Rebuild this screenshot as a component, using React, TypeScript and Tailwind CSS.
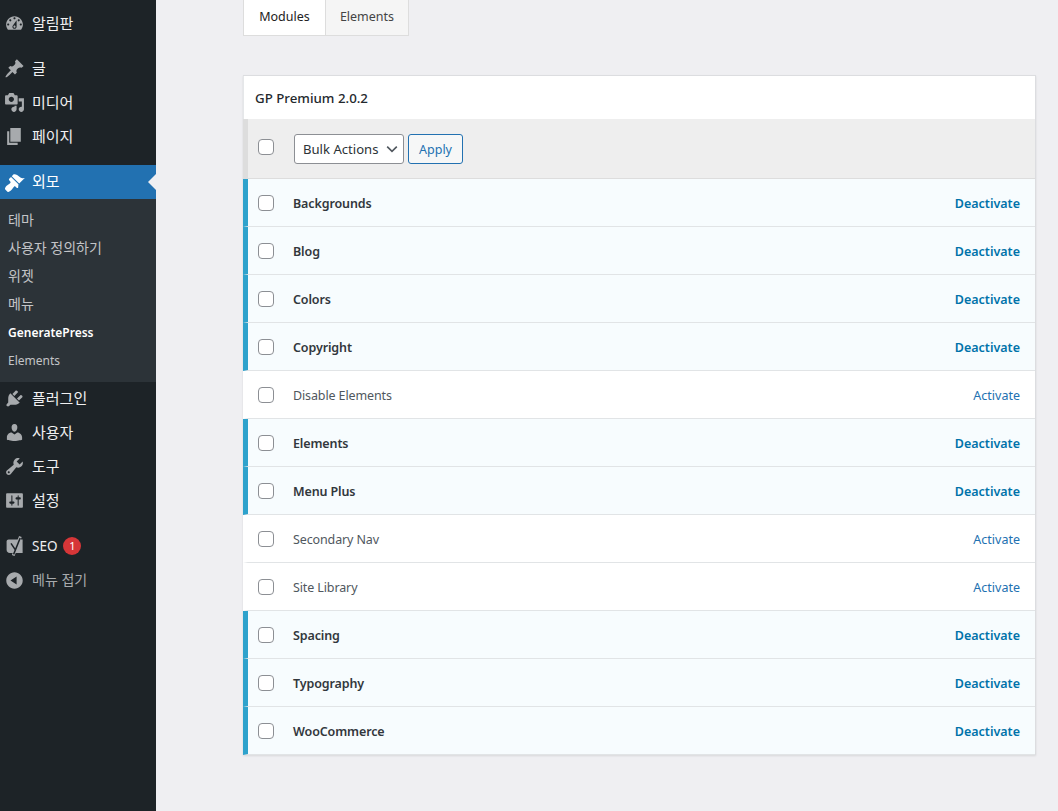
import React from "react";

const P: Record<string, string> = {
  dashboard: "M3.76 16h12.48c1.1-1.37 1.76-3.11 1.76-5 0-4.42-3.58-8-8-8s-8 3.58-8 8c0 1.89.66 3.63 1.76 5zM10 4c.55 0 1 .45 1 1s-.45 1-1 1-1-.45-1-1 .45-1 1-1zM6 6c.55 0 1 .45 1 1s-.45 1-1 1-1-.45-1-1 .45-1 1-1zm8 0c.55 0 1 .45 1 1s-.45 1-1 1-1-.45-1-1 .45-1 1-1zm-5.37 5.55L12 7v6c0 1.1-.9 2-2 2s-2-.9-2-2c0-.57.24-1.08.63-1.45zM4 10c.55 0 1 .45 1 1s-.45 1-1 1-1-.45-1-1 .45-1 1-1zm12 0c.55 0 1 .45 1 1s-.45 1-1 1-1-.45-1-1 .45-1 1-1zm-5 3c0-.55-.45-1-1-1s-1 .45-1 1 .45 1 1 1 1-.45 1-1z",
  post: "M10.44 3.02l1.82-1.82 6.36 6.35-1.83 1.82c-1.05-.68-2.48-.57-3.41.36l-.75.75c-.92.93-1.04 2.35-.35 3.41l-1.83 1.82-2.41-2.41-2.8 2.79c-.42.42-3.38 2.71-3.8 2.29s1.86-3.39 2.28-3.81l2.79-2.79L4.1 9.36l1.83-1.82c1.05.69 2.48.57 3.4-.36l.75-.75c.93-.92 1.05-2.35.36-3.41z",
  media: "M13 11V4c0-.55-.45-1-1-1h-1.67L9 1H5L3.67 3H2c-.55 0-1 .45-1 1v7c0 .55.45 1 1 1h10c.55 0 1-.45 1-1zM7 4.5c1.38 0 2.5 1.12 2.5 2.5S8.38 9.5 7 9.5 4.5 8.38 4.5 7 5.62 4.5 7 4.5zM14 6h5v10.5c0 1.38-1.12 2.5-2.5 2.5S14 17.88 14 16.5s1.12-2.5 2.5-2.5c.17 0 .34.02.5.05V9h-3V6zm-4 8.05V13h2v3.5c0 1.38-1.12 2.5-2.5 2.5S7 17.88 7 16.5 8.12 14 9.5 14c.17 0 .34.02.5.05z",
  page: "M6 15V2h10v13H6zm-1 1h8v2H3V5h2v11z",
  appearance: "M14.48 11.06L7.41 3.99l1.5-1.5c.5-.56 2.3-.47 3.51.32 1.21.8 1.43 1.28 2.91 2.1 1.18.64 2.45 1.26 4.45.85zm-.71.71L6.7 4.7 4.93 6.47c-.39.39-.39 1.02 0 1.41l1.06 1.06c.39.39.39 1.03 0 1.42-.6.6-1.43 1.11-2.21 1.69-.35.26-.7.53-1.01.84-1.34 1.34-2.37 2.91-1.57 3.71l2.12 2.12c.8.8 2.37-.23 3.71-1.57.31-.31.58-.66.84-1.01.58-.78 1.09-1.61 1.69-2.21.39-.39 1.03-.39 1.42 0l1.06 1.06c.39.39 1.02.39 1.41 0z",
  plugin: "M13.11 4.36L9.87 7.6 8 5.73l3.24-3.24c.35-.34 1.05-.2 1.56.32.52.51.66 1.21.31 1.55zm-8 1.77l.91-1.12 9.01 9.01-1.19.84c-.71.71-2.63 1.16-3.82 1.16H6.14L4.9 17.26c-.59.59-1.54.59-2.12 0-.59-.58-.59-1.53 0-2.12l1.24-1.24v-3.88c0-1.13.4-3.19 1.09-3.89zm7.26 3.97l3.24-3.24c.34-.35 1.04-.21 1.55.31.52.51.66 1.21.31 1.55l-3.24 3.25z",
  users: "M10 9.25c-2.27 0-2.73-3.44-2.73-3.44C7 4.02 7.82 2 9.97 2c2.16 0 2.98 2.02 2.71 3.81 0 0-.41 3.44-2.68 3.44zm0 2.57L12.72 10c2.39 0 4.52 2.33 4.52 4.53v2.49s-3.65 1.13-7.24 1.13c-3.65 0-7.24-1.13-7.24-1.13v-2.49c0-2.25 1.94-4.48 4.47-4.48z",
  tools: "M16.68 9.77c-1.34 1.34-3.3 1.67-4.95.99l-5.41 6.52c-.99.99-2.59.99-3.58 0s-.99-2.59 0-3.57l6.52-5.42c-.68-1.65-.35-3.61.99-4.95 1.28-1.28 3.12-1.62 4.72-1.06l-2.89 2.89 2.82 2.82 2.86-2.87c.53 1.58.18 3.39-1.08 4.65zM3.81 16.21c.4.39 1.04.39 1.43 0 .4-.4.4-1.04 0-1.43-.39-.4-1.03-.4-1.43 0-.39.39-.39 1.03 0 1.43z",
  settings: "M18 16V4c0-.55-.45-1-1-1H3c-.55 0-1 .45-1 1v12c0 .55.45 1 1 1h14c.55 0 1-.45 1-1zM8 11h1c.55 0 1 .45 1 1s-.45 1-1 1H8v1.5c0 .28-.22.5-.5.5s-.5-.22-.5-.5V13H6c-.55 0-1-.45-1-1s.45-1 1-1h1V5.5c0-.28.22-.5.5-.5s.5.22.5.5V11zm5-2h-1c-.55 0-1-.45-1-1s.45-1 1-1h1V5.5c0-.28.22-.5.5-.5s.5.22.5.5V7h1c.55 0 1 .45 1 1s-.45 1-1 1h-1v5.5c0 .28-.22.5-.5.5s-.5-.22-.5-.5V9z",
  collapse: "M10 2.16c4.33 0 7.84 3.51 7.84 7.84s-3.51 7.84-7.84 7.84S2.16 14.33 2.16 10 5.71 2.16 10 2.16zm2 11.72V6.12L6.18 9.97z",
};

function Dash({ name, className }: { name: string; className?: string }) {
  return (
    <svg viewBox="0 0 20 20" width={21} height={21} className={className} fill="currentColor" fillRule="evenodd" clipRule="evenodd">
      <path d={P[name]} />
    </svg>
  );
}

function YoastIcon() {
  return (
    <svg viewBox="0 0 20 20" width={20} height={20} className="mr-[6px] shrink-0" fill="none">
      <path d="M3.6 3.6H17.6V17H4.6C3 17 1.6 15.6 1.6 14V5.6C1.6 4.5 2.5 3.6 3.6 3.6z" fill="#a7aaad" />
      <path d="M15.4 0.5L8.2 19.6" stroke="#a7aaad" strokeWidth={2.8} />
      <path d="M15.2 2L8.6 18.4M6 7.4L10.2 13.6" stroke="#1d2327" strokeWidth={1.5} />
    </svg>
  );
}

function Item({ icon, label }: { icon: string; label: string }) {
  return (
    <div className="flex h-[34px] items-center pl-[4px] text-[15px] text-[#f0f0f1]">
      <Dash name={icon} className="mr-[7px] shrink-0 text-[#a7aaad]" />
      <span>{label}</span>
    </div>
  );
}

function Sub({ label, active, latin }: { label: string; active?: boolean; latin?: boolean }) {
  return (
    <div
      className={`flex h-[28px] items-center pl-[8px] ${latin ? "pt-[2px] text-[12px]" : "pb-[2px] text-[14px]"} ${
        active ? "font-semibold text-white" : "text-[#c3c4c7]"
      }`}
    >
      {label}
    </div>
  );
}

function Check({ className = "" }: { className?: string }) {
  return <input type="checkbox" className={`h-4 w-4 shrink-0 appearance-none rounded-[4px] border border-[#8c8f94] bg-white ${className}`} />;
}

const modules: [string, boolean][] = [
  ["Backgrounds", true],
  ["Blog", true],
  ["Colors", true],
  ["Copyright", true],
  ["Disable Elements", false],
  ["Elements", true],
  ["Menu Plus", true],
  ["Secondary Nav", false],
  ["Site Library", false],
  ["Spacing", true],
  ["Typography", true],
  ["WooCommerce", true],
];

function Row({ name, active }: { name: string; active: boolean }) {
  return (
    <div
      className={`flex h-[48px] items-center border-b border-b-[#e1e4e6] border-l-[5px] pl-[10px] pr-[15px] text-[12.5px] ${
        active ? "border-l-[#2ea2cc] bg-[#f7fcfe]" : "border-l-white bg-white"
      }`}
    >
      <Check />
      <span className={`ml-[19px] flex-1 pt-[3px] tracking-[-0.12px] ${active ? "font-semibold text-[#32373c]" : "text-[#50575e]"}`}>{name}</span>
      <span className={`pt-[3px] ${active ? "font-semibold text-[#0073aa]" : "text-[#2271b1]"}`}>{active ? "Deactivate" : "Activate"}</span>
    </div>
  );
}

export default function App() {
  return (
    <div
      className="flex h-[811px] w-[1058px] overflow-hidden bg-[#efeff2]"
      style={{ fontFamily: '"Noto Sans", "Noto Sans CJK KR", sans-serif' }}
    >
      <aside className="flex w-[156px] shrink-0 flex-col bg-[#1d2327] pt-[6px]">
        <Item icon="dashboard" label="알림판" />
        <div className="h-[11px]" />
        <Item icon="post" label="글" />
        <Item icon="media" label="미디어" />
        <Item icon="page" label="페이지" />
        <div className="h-[12px]" />
        <div className="relative flex h-[34px] items-center bg-[#2271b1] pl-[4px] text-[15px] text-white">
          <Dash name="appearance" className="mr-[7px] shrink-0 text-white" />
          <span className="pb-[2px]">외모</span>
          <span className="absolute right-0 top-[9px] h-0 w-0 border-y-[8px] border-r-[8px] border-y-transparent border-r-[#efeff2]" />
        </div>
        <div className="bg-[#2c3338] pb-[8px] pt-[7px]">
          <Sub label="테마" />
          <Sub label="사용자 정의하기" />
          <Sub label="위젯" />
          <Sub label="메뉴" />
          <Sub label="GeneratePress" active latin />
          <Sub label="Elements" latin />
        </div>
        <div className="-mt-px" />
        <Item icon="plugin" label="플러그인" />
        <Item icon="users" label="사용자" />
        <Item icon="tools" label="도구" />
        <Item icon="settings" label="설정" />
        <div className="h-[12px]" />
        <div className="flex h-[34px] items-center pl-[5px] text-[13.5px] text-[#f0f0f1]">
          <YoastIcon />
          <span className="ml-px">SEO</span>
          <span className="ml-[6px] flex h-[18px] w-[18px] items-center justify-center rounded-full bg-[#d63638] text-[11px] text-white">1</span>
        </div>
        <div className="flex h-[34px] items-center pl-[4px] text-[14px] text-[#a7aaad]">
          <Dash name="collapse" className="mr-[7px] shrink-0 text-[#a7aaad]" />
          <span className="pb-[2px]">메뉴 접기</span>
        </div>
      </aside>

      <main className="ml-[87px] w-[793px] shrink-0">
        <div className="flex h-[36px] text-[12.5px] text-[#444]">
          <div className="flex w-[83px] items-center justify-center border border-t-0 border-[#dddddd] bg-white text-[#222]">Modules</div>
          <div className="flex w-[83px] items-center justify-center border border-l-0 border-t-0 border-[#dddddd] bg-[#f5f5f5]">Elements</div>
        </div>

        <div className="mt-[39px] border-r border-t border-[#dcdde0] bg-white shadow-[0_1px_2px_rgba(0,0,0,0.1)]">
          <div className="flex h-[43px] items-center border-l border-l-[#e5e7e9] pl-[11px] pt-[2px] text-[13.3px] font-medium text-[#23282d]">GP Premium 2.0.2</div>
          <div className="flex h-[60px] items-center border-b border-b-[#dddddd] border-l-[5px] border-l-[#dddddd] bg-[#eeeeee] pl-[10px]">
            <Check className="-mt-[4px]" />
            <div className="relative ml-[20px] mt-px flex h-[30px] w-[110px] items-center rounded-[3px] border border-[#8c8f94] bg-white pl-[8px] pt-[2px] text-[13.1px] text-[#2c3338]">
              Bulk Actions
              <svg viewBox="0 0 20 20" width={16} height={16} className="absolute right-[3px] top-[6px]" fill="none" stroke="#50575e" strokeWidth={2}>
                <path d="M4 7l6 6 6-6" />
              </svg>
            </div>
            <div className="ml-[4px] mt-px flex h-[30px] w-[55px] items-center justify-center rounded-[3px] border border-[#2271b1] bg-[#f6f7f7] pt-[2px] text-[12.5px] text-[#2271b1]">
              Apply
            </div>
          </div>
          {modules.map(([n, a]) => (
            <Row key={n} name={n} active={a} />
          ))}
        </div>
      </main>
    </div>
  );
}
